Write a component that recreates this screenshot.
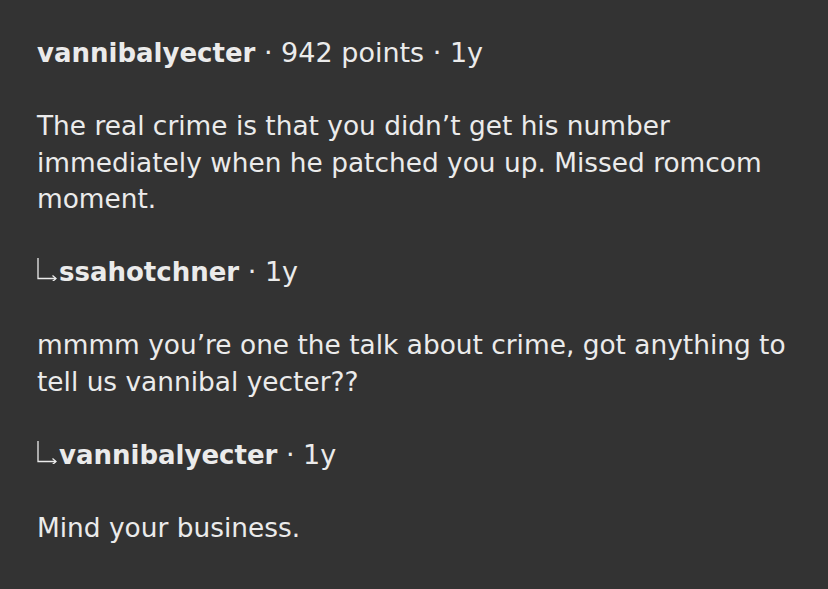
function Arrow() {
  return (
    <svg width="21" height="24" viewBox="0 0 21 24" className="inline-block align-baseline mr-[1px]" fill="none" stroke="#ebebeb" strokeWidth="1.3">
      <path d="M1 1 V21.5 H19" />
      <path d="M15.5 18.5 L19 21.5 L15.5 24.5" />
    </svg>
  );
}

export default function App() {
  const font = { fontFamily: '"DejaVu Sans", Verdana, sans-serif' };
  return (
    <div className="w-[828px] h-[589px] bg-[#333333] text-[#ebebeb] text-[26.4px] leading-[36.5px] pt-[35px] pl-[37px] pr-[20px]" style={font}>
      <div className="text-[27px]">
        <span className="font-bold text-[26px]">vannibalyecter</span>
        <span> · 942 points · 1y</span>
      </div>
      <p className="mt-[36.5px]">
        The real crime is that you didn’t get his number immediately when he patched you up. Missed romcom moment.
      </p>
      <div className="mt-[36.5px] text-[27px]">
        <Arrow />
        <span className="font-bold text-[26px]">ssahotchner</span>
        <span> · 1y</span>
      </div>
      <p className="mt-[36.5px]">
        mmmm you’re one the talk about crime, got anything to tell us vannibal yecter??
      </p>
      <div className="mt-[36.5px] text-[27px]">
        <Arrow />
        <span className="font-bold text-[26px]">vannibalyecter</span>
        <span> · 1y</span>
      </div>
      <p className="mt-[36.5px]">Mind your business.</p>
    </div>
  );
}
